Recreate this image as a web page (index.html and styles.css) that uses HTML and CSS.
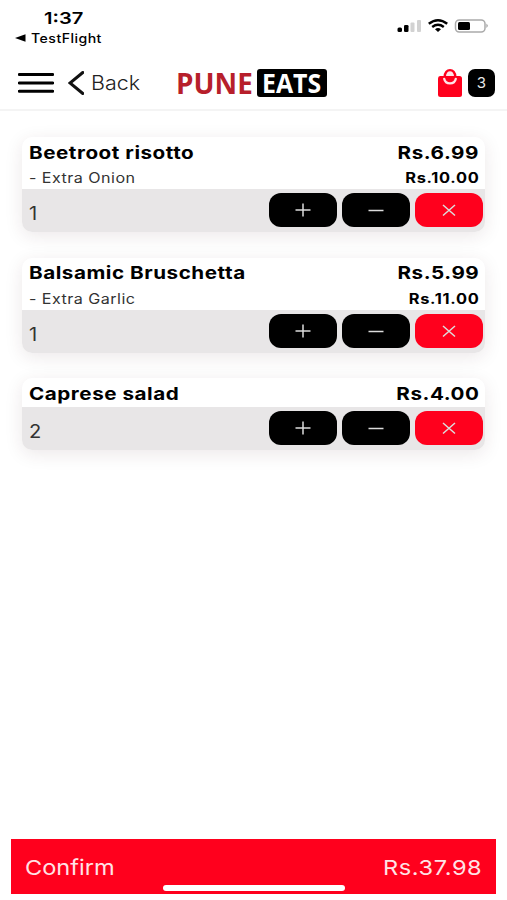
FILE: index.html
```html
<!DOCTYPE html>
<html lang="en">
<head>
  <meta charset="UTF-8" />
  <title>Pune Eats - Cart</title>
  <link rel="stylesheet" href="styles.css">
</head>
<body>

  <div class="status">
    <div class="status-left">
      <span class="time">1:37</span>
      <div class="return">
        <svg width="11" height="8" viewBox="0 0 11 8"><path d="M0 4L10.500 .3V7.700z" /></svg>
        <span class="return-app">TestFlight</span>
      </div>
    </div>
    <svg class="status-icons" width="92" height="16" viewBox="0 0 92 16">
      <!-- signal -->
      <rect x="0.500" y="9.500" width="4.500" height="4.500" rx="1.500" />
      <rect x="7" y="7" width="4.500" height="7" rx="1.300" />
      <rect x="13.500" y="4.500" width="4" height="9.500" rx="1" fill="#d2d2d2" />
      <rect x="20" y="2" width="4" height="12" rx="1" fill="#d2d2d2" />
      <!-- wifi -->
      <g fill="none" stroke="#000" stroke-width="2.500">
        <path d="M31.800 5.800Q41 -1.200 50.200 5.800" />
        <path d="M35.200 9Q41 4.600 46.800 9" />
      </g>
      <path d="M38 11.200Q41 8.800 44 11.200L41 14z" />
      <!-- battery -->
      <rect x="58.500" y="2" width="29.500" height="12" rx="3.800" fill="#fff" stroke="#aaa" stroke-width="1.500" />
      <rect x="61" y="4" width="12" height="8" rx="1.500" />
      <path d="M89.300 5.500Q92.500 7.800 89.300 10z" fill="#aaa" />
    </svg>
  </div>

  <header class="navbar">
    <svg class="menu" width="36" height="22" viewBox="0 0 36 22">
      <path d="M1.200 2.500H34.800M1.200 11H34.800M1.200 19.200H34.800" />
    </svg>
    <a class="back">
      <svg width="16" height="24" viewBox="0 0 16 24"><path d="M14.800 1.500L2 12L14.800 22.500" /></svg>
      <span class="back-text">Back</span>
    </a>
    <div class="logo">
      <span class="pune">PUNE</span>
      <span class="eats"><span class="eats-text">EATS</span></span>
    </div>
    <div class="cart">
      <svg width="26" height="30" viewBox="0 0 26 30">
        <path d="M3 8H22.500Q25 8 25 10.500V26.500Q25 29 22.500 29H3.500Q1 29 1 26.500V10.500Q1 8 3 8z" fill="#ff001d" />
        <path d="M7.700 9C7.700 -.2 18.300 -.2 18.300 9" fill="#ffe5e7" stroke="#ff001d" stroke-width="2.400" />
        <path d="M7 8H19V10.500H7z" fill="#ff001d" />
        <path d="M7.200 10.800C8.500 17 17.500 17 18.800 10.800" fill="none" stroke="#ffe5e7" stroke-width="2.300" stroke-linecap="round" />
      </svg>
      <span class="count">3</span>
    </div>
  </header>

  <main class="items">
    <section class="item">
      <div class="row name"><span>Beetroot risotto</span><span class="price">Rs.6.99</span></div>
      <div class="row extra"><span class="extra-name">- Extra Onion</span><span class="extra-price">Rs.10.00</span></div>
      <div class="actions">
        <span class="qty">1</span>
        <button class="btn"><svg width="16" height="14" viewBox="0 0 16 14"><path d="M.5 7H15.500M8 .5V13.500" /></svg></button>
        <button class="btn"><svg width="16" height="14" viewBox="0 0 16 14"><path d="M.5 7.500H15.500" /></svg></button>
        <button class="btn remove"><svg width="16" height="14" viewBox="0 0 16 14"><path d="M2 2L14 12.500M14 2L2 12.500" /></svg></button>
      </div>
    </section>

    <section class="item">
      <div class="row name"><span>Balsamic Bruschetta</span><span class="price">Rs.5.99</span></div>
      <div class="row extra"><span class="extra-name">- Extra Garlic</span><span class="extra-price">Rs.11.00</span></div>
      <div class="actions">
        <span class="qty">1</span>
        <button class="btn"><svg width="16" height="14" viewBox="0 0 16 14"><path d="M.5 7H15.500M8 .5V13.500" /></svg></button>
        <button class="btn"><svg width="16" height="14" viewBox="0 0 16 14"><path d="M.5 7.500H15.500" /></svg></button>
        <button class="btn remove"><svg width="16" height="14" viewBox="0 0 16 14"><path d="M2 2L14 12.500M14 2L2 12.500" /></svg></button>
      </div>
    </section>

    <section class="item">
      <div class="row name"><span>Caprese salad</span><span class="price">Rs.4.00</span></div>
      <div class="actions">
        <span class="qty">2</span>
        <button class="btn"><svg width="16" height="14" viewBox="0 0 16 14"><path d="M.5 7H15.500M8 .5V13.500" /></svg></button>
        <button class="btn"><svg width="16" height="14" viewBox="0 0 16 14"><path d="M.5 7.500H15.500" /></svg></button>
        <button class="btn remove"><svg width="16" height="14" viewBox="0 0 16 14"><path d="M2 2L14 12.500M14 2L2 12.500" /></svg></button>
      </div>
    </section>
  </main>

  <footer class="confirm">
    <span>Confirm</span>
    <span class="total">Rs.37.98</span>
    <div class="home-bar"></div>
  </footer>

</body>
</html>
```
FILE: styles.css
```css
* {
  box-sizing: border-box;
}
body {
  margin: 0;
  height: 900px;
  display: flex;
  flex-direction: column;
  overflow: hidden;
  background: #fff;
  color: #000;
  font-family: Inter, "Liberation Sans", sans-serif;
}
svg {
  display: block;
  flex: none;
}
.status {
  height: 56px;
  display: flex;
  justify-content: space-between;
  padding: 8px 18px 0 15px;
}
.time {
  display: block;
  margin-left: 29px;
  font-size: 16.5px;
  font-weight: 600;
  line-height: 20px;
  transform: scaleX(1.22);
  transform-origin: left;
}
.return {
  display: flex;
  align-items: center;
  gap: 5px;
  height: 20px;
}
.return-app {
  font-size: 12.5px;
  font-weight: 500;
  letter-spacing: 0.4px;
  transform: scaleX(1.13);
  transform-origin: left;
}
.status-icons {
  margin-top: 10px;
}
.navbar {
  height: 55px;
  display: flex;
  align-items: center;
  padding: 0 12px 0 18px;
  border-bottom: 2px solid #f4f4f4;
}
.menu path {
  stroke: #000;
  stroke-width: 3;
  stroke-linecap: round;
}
.back {
  display: flex;
  align-items: center;
  gap: 7px;
  width: 86px;
  margin-left: 14px;
}
.back path {
  fill: none;
  stroke: #111;
  stroke-width: 3;
  stroke-linecap: round;
}
.back-text {
  font-size: 19.5px;
  font-weight: 300;
  color: #222;
  transform: scaleX(1.1);
  transform-origin: left;
}
.logo {
  display: flex;
  align-items: center;
  margin-left: 22px;
  font-family: "Open Sans", sans-serif;
  font-weight: 700;
  font-size: 29px;
  line-height: 28px;
}
.pune {
  width: 81px;
  color: #b71f2b;
  transform: scaleX(0.96);
  transform-origin: left;
}
.eats {
  width: 70px;
  height: 28px;
  padding-left: 5px;
  border-radius: 3px;
  background: #000;
  color: #fff;
  font-size: 27px;
}
.eats-text {
  display: inline-block;
  transform: scaleX(0.92);
  transform-origin: left;
}
.cart {
  display: flex;
  align-items: center;
  gap: 5px;
  margin-left: auto;
}
.count {
  width: 27px;
  height: 28px;
  border-radius: 7px;
  background: #000;
  color: #e8e8e8;
  font-size: 15px;
  line-height: 28px;
  text-align: center;
}
.items {
  display: flex;
  flex-direction: column;
  gap: 25.5px;
  padding: 26px 22px 0;
}
.item {
  border-radius: 10px;
  background: #fff;
  box-shadow: 0 4px 18px rgba(70, 30, 40, 0.1);
}
.row {
  display: flex;
  justify-content: space-between;
  align-items: center;
  padding: 0 7px;
}
.row span {
  transform-origin: left;
}
.name {
  height: 29px;
  padding-top: 1px;
  font-size: 17.5px;
  font-weight: 700;
  letter-spacing: 0.45px;
}
.name span {
  transform: scaleX(1.18);
}
.extra {
  height: 23px;
  font-size: 14px;
}
.extra-name {
  color: #333;
  letter-spacing: 0.4px;
  transform: scaleX(1.15);
}
.extra-price {
  font-weight: 700;
  letter-spacing: 0.6px;
  transform: scaleX(1.17);
}
.row .price,
.row .extra-price {
  margin-right: -1px;
  transform-origin: right;
}
.actions {
  display: flex;
  gap: 5px;
  height: 43px;
  padding: 4px 2px 5px 7px;
  border-radius: 0 0 10px 10px;
  background: #e8e6e7;
}
.qty {
  flex: 1;
  padding-top: 4px;
  color: #333;
  font-size: 18px;
  line-height: 34px;
  transform: scaleX(1.12);
  transform-origin: left;
}
.btn {
  width: 68px;
  height: 34px;
  display: flex;
  align-items: center;
  justify-content: center;
  padding: 0;
  border: 0;
  border-radius: 12px;
  background: #000;
}
.btn path {
  stroke: #dcdcdc;
  stroke-width: 1.5;
}
.remove {
  background: #ff001d;
}
.confirm {
  position: relative;
  display: flex;
  justify-content: space-between;
  align-items: center;
  height: 55px;
  margin: auto 11px 6px;
  padding: 1px 14px 0;
  background: #ff001d;
  color: #ffe3e6;
  font-size: 20.5px;
}
.confirm span {
  transform: scaleX(1.15);
  transform-origin: left;
}
.confirm .total {
  letter-spacing: 0.5px;
  transform-origin: right;
}
/* iOS home indicator, lies over the button */
.home-bar {
  position: absolute;
  left: 152px;
  bottom: 3px;
  width: 182px;
  height: 6px;
  border-radius: 3px;
  background: #fff;
}
```
